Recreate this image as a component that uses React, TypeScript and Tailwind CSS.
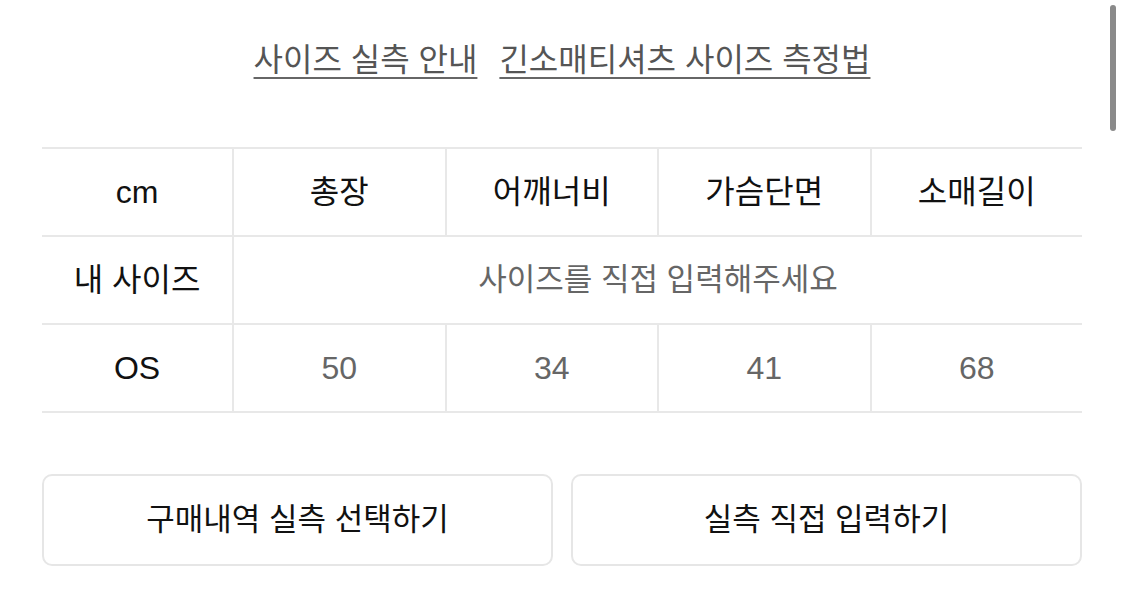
import React from "react";

const FONT = { fontFamily: '"Liberation Sans", "Noto Sans CJK KR", sans-serif' };

export default function App() {
  const headers = ["총장", "어깨너비", "가슴단면", "소매길이"];
  const values = ["50", "34", "41", "68"];
  return (
    <div className="relative w-[1125px] h-[610px] bg-white overflow-hidden pl-[42px] pr-[43px]" style={FONT}>
      <div className="pt-[38px] flex justify-center gap-[22px] text-[32px] leading-[44px] text-[#555]">
        <span className="underline decoration-2 underline-offset-[6px] decoration-[#666]">사이즈 실측 안내</span>
        <span className="underline decoration-2 underline-offset-[6px] decoration-[#666]">긴소매티셔츠 사이즈 측정법</span>
      </div>

      <div className="mt-[65px] grid grid-cols-[190px_repeat(4,1fr)] border-t-2 border-[#e8e8e8]">
        <div className="h-[88px] flex items-center justify-center border-b-2 border-[#e8e8e8] text-[32px] text-[#111]">cm</div>
        {headers.map((h) => (
          <div key={h} className="h-[88px] flex items-center justify-center border-b-2 border-l-2 border-[#e8e8e8] text-[32px] text-[#111]">
            {h}
          </div>
        ))}
        <div className="h-[88px] flex items-center justify-center border-b-2 border-[#e8e8e8] text-[32px] text-[#111]">내 사이즈</div>
        <div className="col-span-4 h-[88px] flex items-center justify-center border-b-2 border-l-2 border-[#e8e8e8] text-[31px] text-[#666]">
          사이즈를 직접 입력해주세요
        </div>
        <div className="h-[88px] flex items-center justify-center border-b-2 border-[#e8e8e8] text-[32px] text-[#111]">OS</div>
        {values.map((v) => (
          <div key={v} className="h-[88px] flex items-center justify-center border-b-2 border-l-2 border-[#e8e8e8] text-[32px] text-[#666]">
            {v}
          </div>
        ))}
      </div>

      <div className="mt-[61px] grid grid-cols-2 gap-[18px]">
        <div className="h-[92px] flex items-center justify-center rounded-[10px] border-2 border-[#e6e6e6] text-[31px] text-[#111]">
          구매내역 실측 선택하기
        </div>
        <div className="h-[92px] flex items-center justify-center rounded-[10px] border-2 border-[#e6e6e6] text-[31px] text-[#111]">
          실측 직접 입력하기
        </div>
      </div>

      <div className="absolute right-[9px] top-[5px] w-[6px] h-[126px] rounded-full bg-[#8a8a8a]" />
    </div>
  );
}
